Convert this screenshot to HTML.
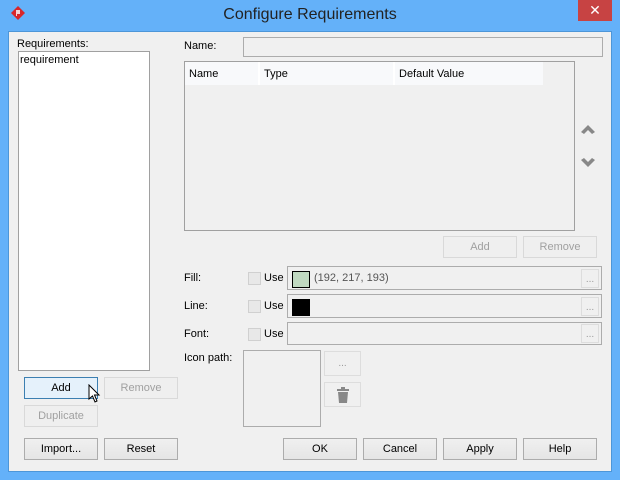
<!DOCTYPE html><html><head><style>
*{box-sizing:border-box;margin:0;padding:0}
body{width:620px;height:480px;background:#64b1f9;font-family:"Liberation Sans",sans-serif;font-size:11px;color:#000;position:relative;overflow:hidden}
.a{position:absolute}
.in{left:8px;top:31px;width:604px;height:441px;background:#f0f0f0;border:1px solid #4d96d8}
.btn{position:absolute;height:22px;border:1px solid #acacac;background:linear-gradient(#f0f0f0,#e5e5e5);text-align:center;line-height:20px;font-size:11px}
.dis{border-color:#d9d9d9;background:#efefef;color:#a0a0a0}
.fld{position:absolute;border:1px solid #acacac;background:#f0f0f0}
.lbl{position:absolute;font-size:11px}
.cb{position:absolute;width:13px;height:13px;border:1px solid #d0d0d0;background:#e8e8e8}
.dots{position:absolute;right:2px;top:2px;width:18px;height:19px;border:1px solid #ddd;color:#999;text-align:center;font-size:10px;line-height:20px}
</style></head><body>
<svg class="a" style="left:10px;top:5px" width="16" height="16" viewBox="0 0 16 16"><path d="M8 1 L15 8 L8 15 L1 8Z" fill="#d8262a"/><path d="M6 5h4v4h-3v2h-1z" fill="#fff" opacity=".8"/></svg>
<div class="a" style="left:0;top:6px;width:620px;text-align:center;font-size:16px;color:#222">Configure Requirements</div>
<div class="a" style="left:578px;top:0;width:34px;height:21px;background:#c74343;color:#fff;text-align:center;font-size:14px;line-height:21px">✕</div>
<div class="a in"></div>
<div class="lbl" style="left:17px;top:38px">Requirements:</div>
<div class="a" style="left:18px;top:51px;width:132px;height:320px;background:#fff;border:1px solid #a0a0a0"></div>
<div class="lbl" style="left:20px;top:54px">requirement</div>
<div class="btn" style="left:24px;top:377px;width:74px;background:#e5f1fb;border-color:#3c7fb1">Add</div>
<div class="btn dis" style="left:104px;top:377px;width:74px">Remove</div>
<div class="btn dis" style="left:24px;top:405px;width:74px">Duplicate</div>
<svg class="a" style="left:88px;top:384px" width="14" height="20" viewBox="0 0 14 20"><path d="M1 1 L1 15 L4.5 12 L7 18 L9 17 L6.5 11 L11 11 Z" fill="#fff" stroke="#000" stroke-width="1"/></svg>
<div class="btn" style="left:24px;top:438px;width:74px">Import...</div>
<div class="btn" style="left:104px;top:438px;width:74px">Reset</div>
<div class="btn" style="left:283px;top:438px;width:74px">OK</div>
<div class="btn" style="left:363px;top:438px;width:74px">Cancel</div>
<div class="btn" style="left:443px;top:438px;width:74px">Apply</div>
<div class="btn" style="left:523px;top:438px;width:74px">Help</div>
<div class="lbl" style="left:184px;top:40px">Name:</div>
<div class="fld" style="left:243px;top:37px;width:360px;height:20px"></div>
<div class="a" style="left:184px;top:61px;width:391px;height:170px;border:1px solid #a0a0a0;background:#f0f0f0"></div>
<div class="a" style="left:185px;top:62px;width:358px;height:23px;background:#f8f9fb"></div>
<div class="a" style="left:258px;top:62px;width:2px;height:23px;background:#fff"></div>
<div class="a" style="left:393px;top:62px;width:2px;height:23px;background:#fff"></div>
<div class="lbl" style="left:189px;top:68px">Name</div>
<div class="lbl" style="left:264px;top:68px">Type</div>
<div class="lbl" style="left:399px;top:68px">Default Value</div>
<svg class="a" style="left:580px;top:122px" width="16" height="48" viewBox="0 0 16 48"><path d="M1 10 L8 3 L15 10 L12 12 L8 8 L4 12Z" fill="#888"/><path d="M1 38 L8 45 L15 38 L12 36 L8 40 L4 36Z" fill="#888"/></svg>
<div class="btn dis" style="left:443px;top:236px;width:74px">Add</div>
<div class="btn dis" style="left:523px;top:236px;width:74px">Remove</div>
<div class="lbl" style="left:184px;top:272px">Fill:</div>
<div class="cb" style="left:248px;top:272px"></div><div class="lbl" style="left:264px;top:272px">Use</div>
<div class="fld" style="left:287px;top:266px;width:315px;height:24px"><div class="a" style="left:4px;top:4px;width:18px;height:17px;background:#c0d9c1;border:1px solid #000"></div><div class="a" style="left:26px;top:5px;color:#555">(192, 217, 193)</div><div class="dots">...</div></div>
<div class="lbl" style="left:184px;top:300px">Line:</div>
<div class="cb" style="left:248px;top:300px"></div><div class="lbl" style="left:264px;top:300px">Use</div>
<div class="fld" style="left:287px;top:294px;width:315px;height:24px"><div class="a" style="left:4px;top:4px;width:18px;height:17px;background:#000"></div><div class="dots">...</div></div>
<div class="lbl" style="left:184px;top:328px">Font:</div>
<div class="cb" style="left:248px;top:328px"></div><div class="lbl" style="left:264px;top:328px">Use</div>
<div class="fld" style="left:287px;top:322px;width:315px;height:23px"><div class="dots" style="top:1px">...</div></div>
<div class="lbl" style="left:184px;top:352px">Icon path:</div>
<div class="a" style="left:243px;top:350px;width:78px;height:77px;border:1px solid #acacac"></div>
<div class="a" style="left:324px;top:351px;width:37px;height:25px;border:1px solid #ddd;color:#999;text-align:center;font-size:10px;line-height:24px">...</div>
<div class="a" style="left:324px;top:382px;width:37px;height:25px;border:1px solid #ddd"><svg class="a" style="left:10px;top:4px" width="16" height="16" viewBox="0 0 16 16"><rect x="2" y="2" width="12" height="2" fill="#888"/><rect x="6" y="0" width="4" height="2" fill="#888"/><path d="M3 5h10l-1 11H4z" fill="#888"/></svg></div>
</body></html>
